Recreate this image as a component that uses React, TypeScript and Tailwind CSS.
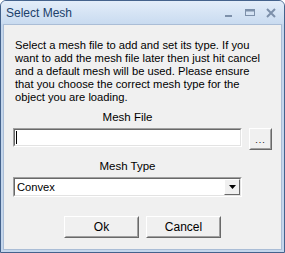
import React from "react";

const font = { fontFamily: '"Liberation Sans", Arial, sans-serif' };

export default function App() {
  return (
    <div className="w-[285px] h-[253px] bg-white">
      <div
        className="w-[285px] h-[253px] flex flex-col border border-[#44628c] rounded-t-[6px] bg-[#c4d6ec] overflow-hidden"
        style={font}
      >
        {/* title bar */}
        <div className="h-[23px] flex items-center bg-gradient-to-b from-[#e3edf9] to-[#c9dbf0] pl-[5px] pr-[7px]">
          <span className="text-[12px] text-[#20406a] leading-none mt-[1px]">Select Mesh</span>
          <div className="ml-auto flex items-center gap-[10px] text-[#7d90aa]">
            <svg width="10" height="10" viewBox="0 0 10 10" className="mt-[2px]">
              <rect x="1" y="6" width="7" height="2" fill="#7d90aa" />
            </svg>
            <svg width="10" height="10" viewBox="0 0 10 10" className="ml-[1px]">
              <rect x="0.5" y="1.5" width="9" height="6" fill="none" stroke="#7d90aa" />
              <rect x="0.5" y="1.5" width="9" height="2" fill="#7d90aa" />
            </svg>
            <svg width="11" height="10" viewBox="0 0 11 10" className="ml-[1px]">
              <path d="M1 1 L9 9 M9 1 L1 9" stroke="#7d90aa" strokeWidth="2" />
            </svg>
          </div>
        </div>
        {/* client */}
        <div className="mx-[2px] mb-[2px] flex-1 border border-[#aabdd6] bg-[#f0f0f0] flex flex-col text-[11.5px] leading-[13px] text-black">
          <p className="ml-[11px] w-[250px] mt-[14px] text-[11.2px]">
            Select a mesh file to add and set its type. If you want to add the mesh file later then just hit cancel and a default mesh will be used. Please ensure that you choose the correct mesh type for the object you are loading.
          </p>
          <div className="ml-[9px] w-[229px] text-center mt-[7px]">Mesh File</div>
          <div className="flex items-start ml-[9px] mt-[4px] gap-[7px]">
            <div className="w-[229px] h-[19px] border border-t-[#a0a0a0] border-l-[#a0a0a0] border-b-white border-r-white">
              <div className="w-full h-full border border-t-[#696969] border-l-[#696969] border-b-[#e3e3e3] border-r-[#e3e3e3] bg-white flex items-center">
                <div className="ml-[1px] w-[1px] h-[13px] bg-black" />
              </div>
            </div>
            <div className="w-[23px] h-[22px] border border-t-white border-l-white border-b-[#696969] border-r-[#696969]">
              <div className="w-full h-full border border-t-[#f0f0f0] border-l-[#f0f0f0] border-b-[#a0a0a0] border-r-[#a0a0a0] bg-[#f0f0f0] flex items-end justify-center pb-[3px] text-[9px] leading-none tracking-[1px]">
                ...
              </div>
            </div>
          </div>
          <div className="ml-[9px] w-[229px] text-center mt-[10px]">Mesh Type</div>
          <div className="ml-[9px] mt-[4px] w-[229px] h-[20px] border border-t-[#a0a0a0] border-l-[#a0a0a0] border-b-white border-r-white">
            <div className="w-full h-full border border-t-[#696969] border-l-[#696969] border-b-[#e3e3e3] border-r-[#e3e3e3] bg-white flex items-center">
              <span className="pl-[2px] text-[11.2px]">Convex</span>
              <div className="ml-auto w-[16px] h-full border border-t-white border-l-white border-b-[#696969] border-r-[#696969] bg-[#f0f0f0] flex items-center justify-center">
                <svg width="7" height="4" viewBox="0 0 7 4">
                  <path d="M0 0 H7 L3.5 4 Z" fill="#000" />
                </svg>
              </div>
            </div>
          </div>
          <div className="flex justify-center gap-[7px] mt-[19px]">
            {["Ok", "Cancel"].map((t) => (
              <div
                key={t}
                className="w-[75px] h-[22px] border border-t-white border-l-white border-b-[#696969] border-r-[#696969]"
              >
                <div className="w-full h-full border border-t-[#f0f0f0] border-l-[#f0f0f0] border-b-[#a0a0a0] border-r-[#a0a0a0] bg-[#f0f0f0] flex items-center justify-center text-[12px]">
                  {t}
                </div>
              </div>
            ))}
          </div>
        </div>
      </div>
    </div>
  );
}
